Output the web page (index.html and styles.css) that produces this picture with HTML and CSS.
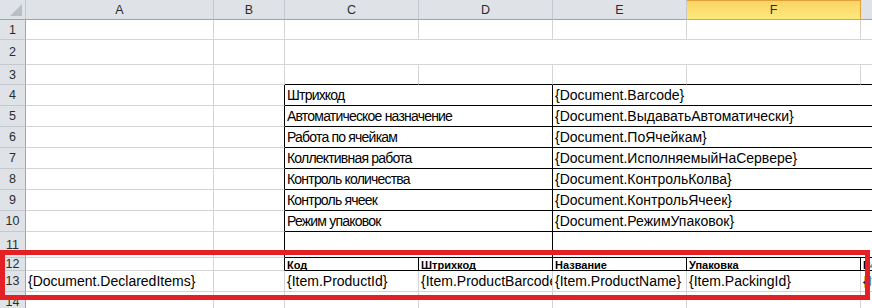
FILE: index.html
```html
<!DOCTYPE html>
<html lang="ru">
<head>
    <meta charset="UTF-8">
    <title>Шаблон документа</title>
    <link rel="stylesheet" href="styles.css">
</head>
<body>
    <div class="wrap">
        <div class="sheet">
            <!-- column headers -->
            <div class="corner"><span class="tri"></span></div>
            <div class="ch">A</div>
            <div class="ch">B</div>
            <div class="ch">C</div>
            <div class="ch">D</div>
            <div class="ch">E</div>
            <div class="ch sel">F</div>
            <div class="ch">G</div>

            <!-- 1 -->
            <div class="rh">1</div>
            <div class="c"></div><div class="c"></div><div class="c"></div><div class="c"></div>
            <div class="c"></div><div class="c"></div><div class="c"></div>

            <!-- 2 -->
            <div class="rh">2</div>
            <div class="c"></div><div class="c"></div>
            <div class="c span5"></div>

            <!-- 3 -->
            <div class="rh">3</div>
            <div class="c"></div><div class="c"></div>
            <div class="c bb"></div><div class="c bb"></div><div class="c bb"></div>
            <div class="c bb"></div><div class="c bb"></div>

            <!-- 4 - 11 -->
            <div class="rh">4</div>
            <div class="c"></div><div class="c br"></div>
            <div class="c box span2 label">Штрихкод</div>
            <div class="c box span3">{Document.Barcode}</div>

            <div class="rh">5</div>
            <div class="c"></div><div class="c br"></div>
            <div class="c box span2 label">Автоматическое назначение</div>
            <div class="c box span3">{Document.ВыдаватьАвтоматически}</div>

            <div class="rh">6</div>
            <div class="c"></div><div class="c br"></div>
            <div class="c box span2 label">Работа по ячейкам</div>
            <div class="c box span3">{Document.ПоЯчейкам}</div>

            <div class="rh">7</div>
            <div class="c"></div><div class="c br"></div>
            <div class="c box span2 label">Коллективная работа</div>
            <div class="c box span3">{Document.ИсполняемыйНаСервере}</div>

            <div class="rh">8</div>
            <div class="c"></div><div class="c br"></div>
            <div class="c box span2 label">Контроль количества</div>
            <div class="c box span3">{Document.КонтрольКолва}</div>

            <div class="rh">9</div>
            <div class="c"></div><div class="c br"></div>
            <div class="c box span2 label">Контроль ячеек</div>
            <div class="c box span3">{Document.КонтрольЯчеек}</div>

            <div class="rh">10</div>
            <div class="c"></div><div class="c br"></div>
            <div class="c box span2 label">Режим упаковок</div>
            <div class="c box span3">{Document.РежимУпаковок}</div>

            <div class="rh">11</div>
            <div class="c"></div><div class="c br"></div>
            <div class="c box span2"></div>
            <div class="c box span3"></div>

            <!-- 12: table header -->
            <div class="rh">12</div>
            <div class="c"></div><div class="c br"></div>
            <div class="c box th">Код</div>
            <div class="c box th">Штрихкод</div>
            <div class="c box th">Название</div>
            <div class="c box th">Упаковка</div>
            <div class="c box th">Вес</div>

            <!-- 13 -->
            <div class="rh">13</div>
            <div class="c">{Document.DeclaredItems}</div>
            <div class="c"></div>
            <div class="c">{Item.ProductId}</div>
            <div class="c">{Item.ProductBarcode}</div>
            <div class="c">{Item.ProductName}</div>
            <div class="c">{Item.PackingId}</div>
            <div class="c">{Item.Weight}</div>

            <!-- 14 -->
            <div class="rh">14</div>
            <div class="c"></div><div class="c"></div><div class="c"></div><div class="c"></div>
            <div class="c"></div><div class="c"></div><div class="c"></div>
        </div>
        <div class="mark"></div>
    </div>
</body>
</html>
```

FILE: styles.css
```css
body {
    margin: 0;
    overflow: hidden;
    background: #fff;
    font-family: "Liberation Sans", Arial, sans-serif;
}
.wrap {
    position: relative;
    width: 872px;
    height: 308px;
    overflow: hidden;
}
.sheet {
    display: grid;
    grid-template-columns: 26px 188px 71px 134px 134px 134px 174px 60px;
    grid-template-rows: 20px 20px 25px 20px repeat(7, 21px) 26px 13px 21px 21px;
    width: 921px;
}
.sheet > div {
    box-sizing: border-box;
    border-right: 1px solid #d4d4d4;
    border-bottom: 1px solid #d4d4d4;
    overflow: hidden;
    white-space: nowrap;
}

/* headers */
.corner, .ch, .rh {
    background: #dfe3e8;
    color: #2b2b2b;
    font-size: 12.5px;
}
.sheet > .corner, .sheet > .ch {
    border-right-color: #c5c9cf;
    border-bottom-color: #9ea3aa;
}
.ch {
    display: flex;
    align-items: center;
    justify-content: center;
}
.sheet > .ch.sel {
    background: linear-gradient(#f9d466, #fde97d);
    border: 1px solid #e2a23a;
    border-left: none;
}
.corner {
    position: relative;
}
.tri {
    position: absolute;
    right: 3px;
    bottom: 3px;
    width: 0;
    height: 0;
    border-left: 12px solid transparent;
    border-bottom: 12px solid #b9bec6;
}
.rh {
    display: flex;
    align-items: center;
    justify-content: center;
}
.sheet > .rh {
    border-right-color: #9ea3aa;
    border-bottom-color: #c5c9cf;
}

/* cells */
.c {
    display: flex;
    align-items: center;
    padding: 0 2px;
    font-size: 14px;
    color: #000;
}
.span2 { grid-column: span 2; }
.span3 { grid-column: span 3; }
.span5 { grid-column: span 5; }

.sheet > .bb { border-bottom-color: #000; }
.sheet > .br { border-right-color: #000; }
.sheet > .box {
    border-right-color: #000;
    border-bottom-color: #000;
}
.label {
    letter-spacing: -0.8px;
}
.th {
    font-size: 11px;
    font-weight: bold;
    padding-top: 1px;
}

/* red highlight frame */
.mark {
    position: absolute;
    left: 0;
    top: 250px;
    width: 870px;
    height: 50px;
    box-sizing: border-box;
    border: 5px solid #e51f26;
}
```
